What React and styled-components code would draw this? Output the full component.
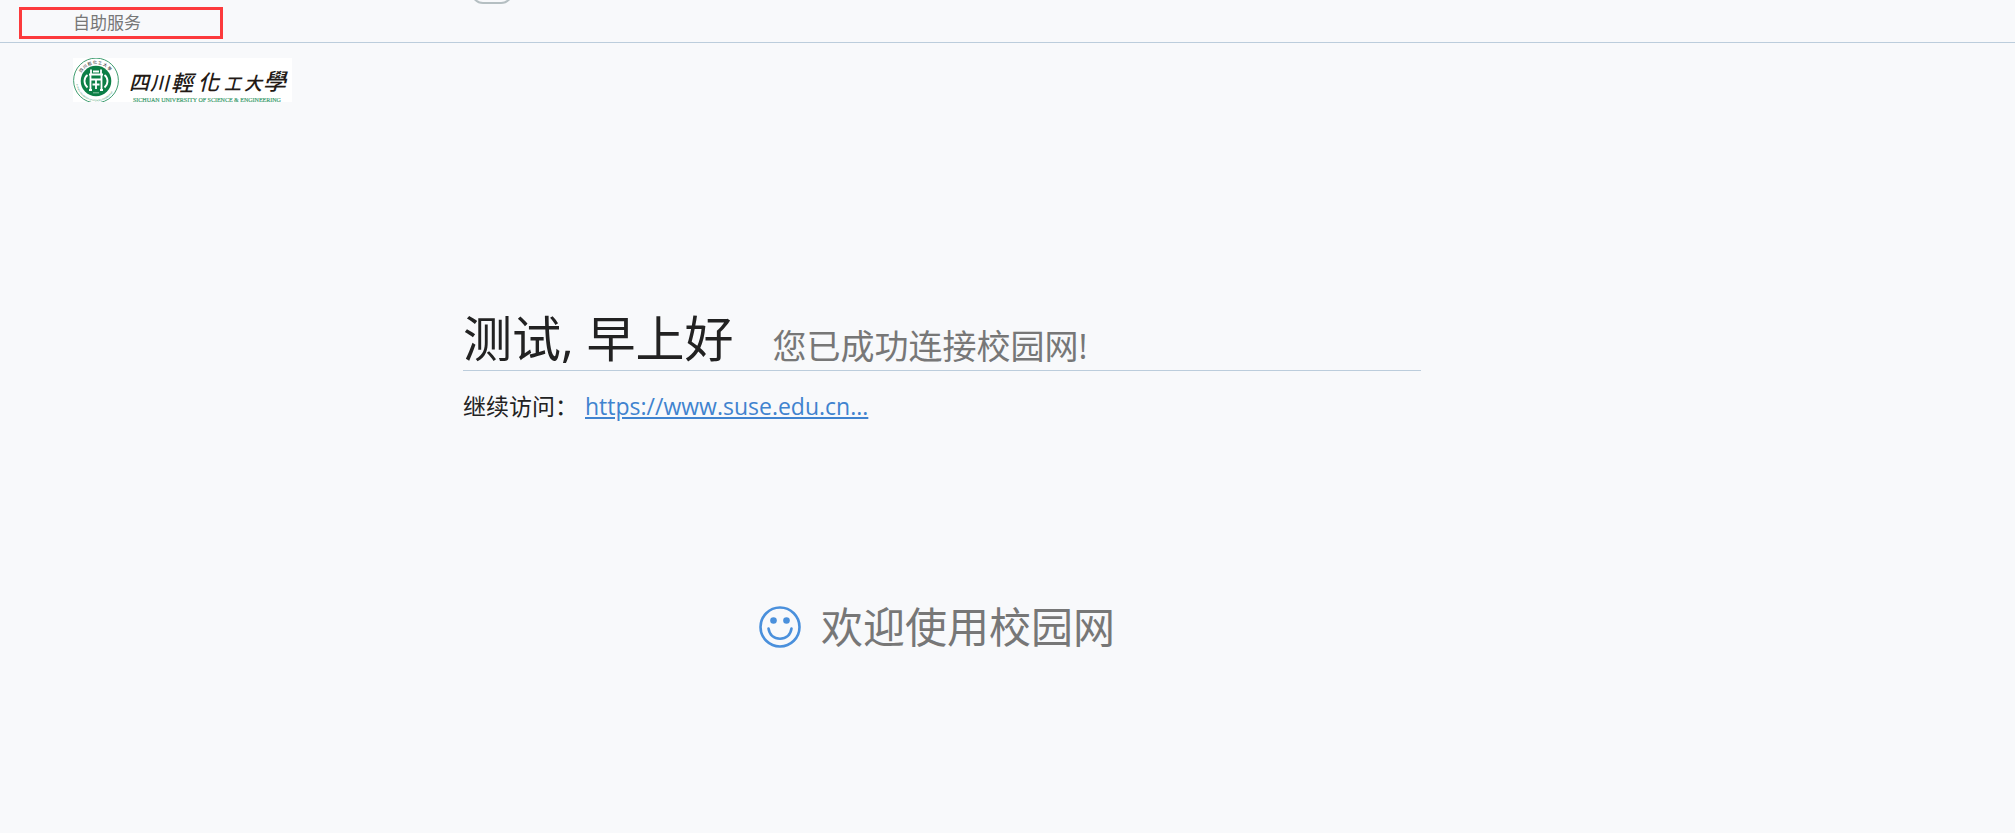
import styled, { createGlobalStyle } from "styled-components";

const App = () => {
  return (
    <>
      <GlobalStyle />
      <TopBar>
        <Notch aria-hidden="true" />
        <ServiceFrame>
          <ServiceLink href="#self-service">自助服务</ServiceLink>
        </ServiceFrame>
      </TopBar>
      <Brand>
        <SchoolLogo />
      </Brand>
      <Main>
        <Content>
          <Greeting>
            <Title>测试, 早上好</Title>
            <Status>您已成功连接校园网!</Status>
          </Greeting>
          <Visit>
            <span>继续访问：</span>
            <VisitLink href="https://www.suse.edu.cn">
              https://www.suse.edu.cn...
            </VisitLink>
          </Visit>
          <Welcome>
            <Smile />
            <span>欢迎使用校园网</span>
          </Welcome>
        </Content>
      </Main>
    </>
  );
};

const Smile = () => (
  <svg width="42" height="42" viewBox="0 0 42 42" fill="none" aria-hidden="true">
    <circle cx="21" cy="21" r="19.5" stroke="#4a90dc" strokeWidth="2.6" />
    <circle cx="14.5" cy="14.5" r="3.3" fill="#4a90dc" />
    <circle cx="27.5" cy="14.5" r="3.3" fill="#4a90dc" />
    <path
      d="M9.5 22.5C10.5 29 15 32.8 21 32.8S31.5 29 32.5 22.5"
      stroke="#4a90dc"
      strokeWidth="2.6"
      strokeLinecap="round"
    />
  </svg>
);

const SchoolLogo = () => (
  <LogoSvg viewBox="0 0 219 44" role="img" aria-label="四川轻化工大学">
    <defs>
      <path id="sealTop" d="M7 26.5A16.5 16.5 0 1 1 39 26.5" />
      <path id="sealBottom" d="M3.5 20A19.8 19.8 0 1 0 42.5 20" />
    </defs>
    {/* 校徽 */}
    <circle cx="23" cy="22.5" r="22.4" fill="#fff" stroke="#3f9d70" strokeWidth="1" />
    <circle cx="23" cy="23" r="15.3" fill="#0c7f46" />
    <SealText fontSize="4" fill="#333">
      <textPath href="#sealTop" startOffset="12">
        四 川 輕 化 工 大 學
      </textPath>
    </SealText>
    <SealText fontSize="2" fill="#3f9d70">
      <textPath href="#sealBottom" startOffset="6">
        SICHUAN UNIVERSITY OF SCIENCE &amp; ENGINEERING
      </textPath>
    </SealText>
    <g stroke="#fff" fill="none" strokeWidth="1.8">
      <path d="M18 11.5V16M28 11.5V16M20 13.5H26M16 16.5H30M17.5 16V32M28.5 16V32M23 22V31M17.5 21.5H28.5M19.5 26.5H26.5M16 32H19M27 32H30" />
      <path d="M14.5 17C10.5 20 10.5 26 14.5 29.5M31.5 17C35.5 20 35.5 26 31.5 29.5" />
    </g>
    <path d="M20 34.8H26" stroke="#8cc4a7" />
    {/* 校名 */}
    <NameText>
      <tspan x="56" y="32" fontSize="20">四</tspan>
      <tspan x="77" y="32" fontSize="19">川</tspan>
      <tspan x="98" y="33" fontSize="22">輕</tspan>
      <tspan x="125" y="32" fontSize="21">化</tspan>
      <tspan x="151" y="32" fontSize="17">工</tspan>
      <tspan x="171" y="32" fontSize="18">大</tspan>
      <tspan x="190" y="32" fontSize="23">學</tspan>
    </NameText>
    <EnglishText x="60" y="44">
      SICHUAN UNIVERSITY OF SCIENCE &amp; ENGINEERING
    </EnglishText>
  </LogoSvg>
);

const GlobalStyle = createGlobalStyle`
  * {
    box-sizing: border-box;
  }
  body {
    margin: 0;
    background: #f8f9fb;
    color: #222;
    font-family: "Open Sans", "Noto Sans CJK SC", sans-serif;
  }
`;

const TopBar = styled.header`
  position: relative;
  height: 43px;
  padding: 7px 19px 0;
  border-bottom: 1px solid #bccddc;
`;

// 顶部露出的半截胶囊
const Notch = styled.div`
  position: absolute;
  top: -20px;
  left: 471px;
  width: 42px;
  height: 24px;
  border: 2px solid #b5bfc2;
  border-radius: 12px;
`;

const ServiceFrame = styled.div`
  display: flex;
  align-items: center;
  width: 204px;
  height: 32px;
  padding-left: 51px;
  border: 3px solid #fc3a3c;
`;

const ServiceLink = styled.a`
  color: #777;
  font-size: 17px;
  line-height: 24px;
  text-decoration: none;
`;

const Brand = styled.div`
  padding: 15px 73px 0;
`;

const LogoSvg = styled.svg`
  display: block;
  width: 219px;
  height: 44px;
  background: #fff;
`;

const SealText = styled.text`
  font-family: "Noto Sans CJK TC", sans-serif;
  font-weight: 500;
`;

const NameText = styled.text`
  fill: #231a16;
  font-family: "Noto Sans CJK TC", sans-serif;
  font-style: italic;
  font-weight: 500;
`;

const EnglishText = styled.text`
  fill: #3f9d70;
  font-family: "Liberation Serif", serif;
  font-size: 6px;
  stroke: #3f9d70;
  stroke-width: 0.2px;
`;

const Main = styled.main`
  display: grid;
  grid-template-columns: 463fr 958fr 594fr;
  padding-top: 200px;
`;

const Content = styled.div`
  grid-column: 2;
`;

const Greeting = styled.div`
  display: flex;
  align-items: flex-end;
  gap: 39px;
  height: 69px;
  border-bottom: 1px solid #bccddc;
  white-space: nowrap;
`;

const Title = styled.h1`
  margin: 0;
  font-size: 49px;
  font-weight: 400;
  line-height: 64px;
`;

const Status = styled.span`
  color: #777;
  font-size: 34px;
  line-height: 48px;
`;

const Visit = styled.div`
  display: flex;
  gap: 7px;
  padding-top: 17px;
  font-size: 23px;
  line-height: 36px;
`;

const VisitLink = styled.a`
  color: #4083cf;
`;

const Welcome = styled.div`
  display: flex;
  align-items: center;
  justify-content: center;
  gap: 20px;
  margin-top: 173px;
  padding-right: 10px;
  color: #777;
  font-size: 42px;
  line-height: 60px;
`;

export default App;
